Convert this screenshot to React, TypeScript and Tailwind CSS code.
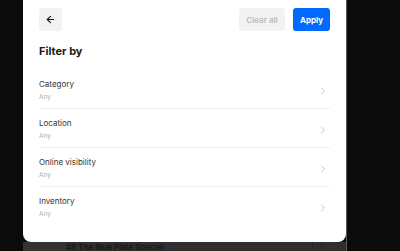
import { ArrowLeft, ChevronRight } from "lucide-react";

const filters = ["Category", "Location", "Online visibility", "Inventory"];

export default function App() {
  return (
    <div
      className="w-[400px] h-[251px] overflow-hidden bg-[#0b0b0b] flex"
      style={{ fontFamily: "Inter, 'Liberation Sans', sans-serif" }}
    >
      <div className="w-[23px] shrink-0" />

      <div className="w-[323px] shrink-0 flex flex-col">
        {/* Modal */}
        <div className="h-[242px] shrink-0 bg-white rounded-b-lg px-4 pt-2">
          {/* Header */}
          <div className="flex items-center h-[23px]">
            <button className="w-[23px] h-[23px] rounded-[3px] bg-[#f2f2f2] flex items-center justify-center text-[#1a1a1a]">
              <ArrowLeft size={11} strokeWidth={2.5} />
            </button>
            <div className="flex-1" />
            <button className="h-[23px] w-[46px] rounded-[3px] bg-[#f2f2f2] text-[#bdbdbd] text-[8px] font-semibold">
              Clear all
            </button>
            <button className="ml-2 h-[23px] w-[37px] rounded-[3px] bg-[#006aff] text-white text-[8px] font-bold">
              Apply
            </button>
          </div>

          <h1 className="mt-[13px] text-[11px] leading-[14px] font-bold text-[#1a1a1a]">
            Filter by
          </h1>

          {/* Filter rows */}
          <div className="mt-[12px] flex flex-col">
            {filters.map((f, i) => (
              <div
                key={f}
                className={`flex items-center pt-2 pb-[4px] ${
                  i < filters.length - 1 ? "border-b border-[#f0f0f0]" : ""
                }`}
              >
                <div className="flex-1">
                  <p className="text-[8px] leading-[12px] text-[#333333]">{f}</p>
                  <p className="text-[6.5px] leading-[14px] text-[#adadad]">Any</p>
                </div>
                <ChevronRight size={12} strokeWidth={2} className="text-[#c4c4c4] mr-[1px]" />
              </div>
            ))}
          </div>
        </div>

        {/* Page behind the overlay */}
        <div className="flex-1 bg-[#2f2f2f] flex items-start">
          <div className="w-[43px] h-full bg-[#333333]" />
          <p className="pt-[1px] text-[8px] leading-[9px] font-medium text-[#141414] whitespace-nowrap">
            #8 The Blue Plate Special
          </p>
          <div className="flex-1" />
          <div className="w-px h-full bg-[#262626]" />
          <div className="w-[8px]" />
          <div className="w-px h-full bg-[#262626]" />
          <div className="w-[24px]" />
        </div>
      </div>

      <div className="w-px shrink-0 bg-[#5a5a5a]" />
    </div>
  );
}
